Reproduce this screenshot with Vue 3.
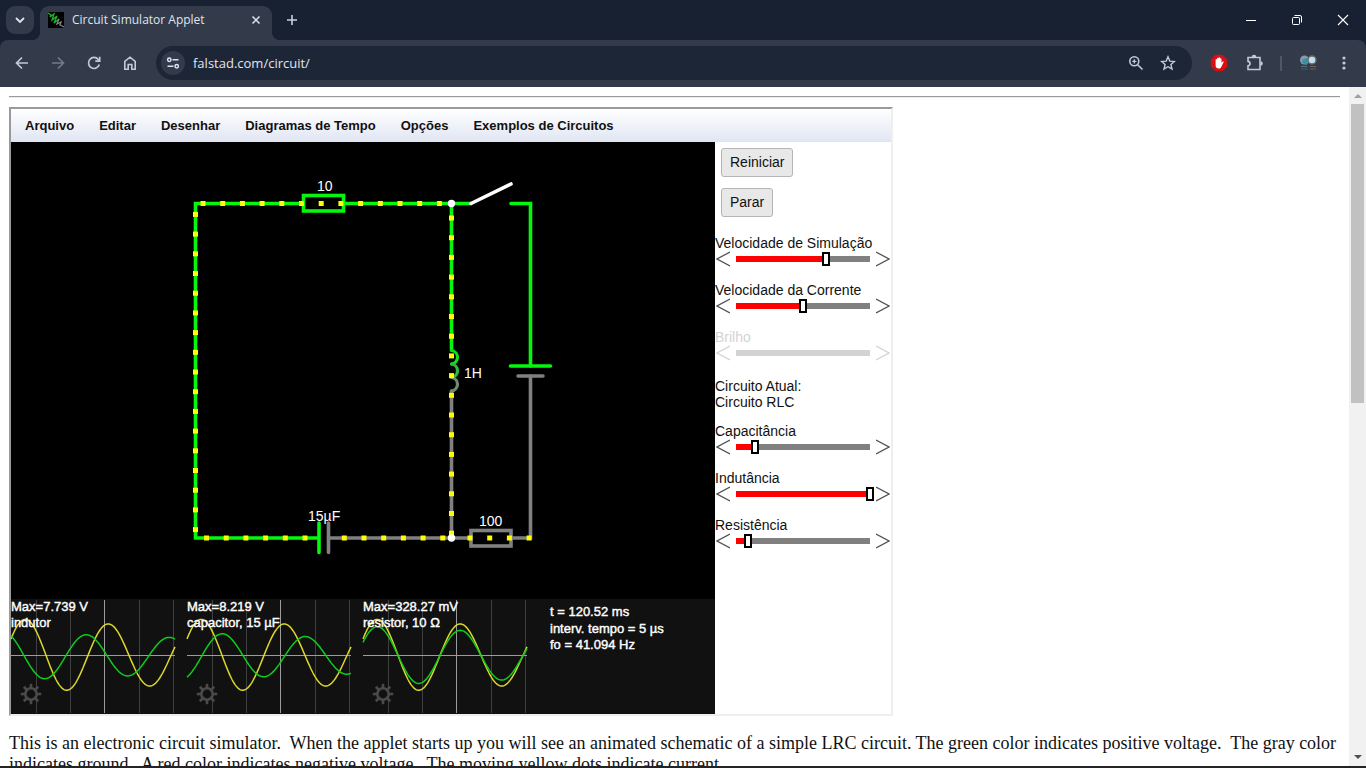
<script setup>
import { ref } from 'vue'

const menus = ['Arquivo', 'Editar', 'Desenhar', 'Diagramas de Tempo', 'Opções', 'Exemplos de Circuitos']

const simSliders = ref([
  { id: 'speed', label: 'Velocidade de Simulação', value: 67 },
  { id: 'current', label: 'Velocidade da Corrente', value: 50 },
  { id: 'bright', label: 'Brilho', value: 0, disabled: true },
])
const circuitSliders = ref([
  { id: 'cap', label: 'Capacitância', value: 14 },
  { id: 'ind', label: 'Indutância', value: 100 },
  { id: 'res', label: 'Resistência', value: 9 },
])

const PITCH = 19.7
const run = (x, y, n, dx, dy) =>
  Array.from({ length: n }, (_, i) => ({ x: x + dx * i * PITCH - 2.5, y: y + dy * i * PITCH - 2.5 }))
const dots = [
  ...run(203, 203.5, 13, 1, 0),
  ...run(195.5, 214.4, 17, 0, 1),
  ...run(206.5, 538, 6, 1, 0),
  ...run(344.3, 538, 6, 1, 0),
  ...run(470, 538, 4, 1, 0),
  ...run(451.5, 218, 17, 0, 1),
]

const wave = (left, peak, amp) => {
  const pts = []
  for (let x = 0; x <= 164; x++) {
    const y = 656 - amp * Math.exp(-0.0016 * x) * Math.cos((2 * Math.PI * (x - peak)) / 83)
    pts.push(`${left + x},${y.toFixed(1)}`)
  }
  return pts.join(' ')
}
const scopes = [
  { left: 11, max: 'Max=7.739 V', name: 'indutor', green: wave(11, -7.5, 24) },
  { left: 187, max: 'Max=8.219 V', name: 'capacitor, 15 µF', green: wave(187, 35.5, 23.5) },
  { left: 363, max: 'Max=328.27 mV', name: 'resistor, 10 Ω', green: wave(363, 14.5, 30) },
].map((s) => ({ ...s, yellow: wave(s.left, 14.5, 37.5) }))
const gridX = [25.5, 59.5, 128.5, 162.5]
const teeth = [0, 45, 90, 135, 180, 225, 270, 315]
</script>

<template>
  <div class="browser">
    <header class="tabs">
      <button class="tab-search" aria-label="Search tabs">
        <svg width="12" height="12" viewBox="0 0 12 12"><path d="M2 4 6 8 10 4" fill="none" stroke="#dfe3ee" stroke-width="1.8" /></svg>
      </button>
      <div class="tab">
        <svg class="favicon" width="16" height="16" viewBox="0 0 16 16">
          <rect width="16" height="16" fill="#000" />
          <path d="M0 1 3 3 2 5 6 2 4 8 9 4 6 11 11 7" fill="none" stroke="#1fb32a" stroke-width="1.3" />
          <path d="m11 7-2 5 4-2-1 3 4 2" fill="none" stroke="#858585" stroke-width="1.3" />
        </svg>
        <span class="tab-title">Circuit Simulator Applet</span>
        <button class="plain" aria-label="Close tab">
          <svg width="10" height="10" viewBox="0 0 10 10"><path d="m1.5 1.5 7 7m0-7-7 7" stroke="#dfe3ee" stroke-width="1.5" /></svg>
        </button>
      </div>
      <button class="plain new-tab" aria-label="New tab">
        <svg width="12" height="12" viewBox="0 0 12 12"><path d="M6 1v10M1 6h10" stroke="#c9cfdd" stroke-width="1.6" /></svg>
      </button>
      <div class="window-buttons">
        <button class="plain" aria-label="Minimize"><svg width="12" height="12" viewBox="0 0 12 12"><path d="M1 6.5h10" stroke="#fff" /></svg></button>
        <button class="plain" aria-label="Restore">
          <svg width="12" height="12" viewBox="0 0 12 12" fill="none" stroke="#fff"><rect x="1.5" y="3.5" width="7" height="7" rx="1" /><path d="M3.5 1.5H9a1.5 1.5 0 0 1 1.500 1.500V8.500" /></svg>
        </button>
        <button class="plain" aria-label="Close"><svg width="12" height="12" viewBox="0 0 12 12"><path d="m1 1 10 10M11 1 1 11" stroke="#fff" stroke-width="1.1" /></svg></button>
      </div>
    </header>

    <nav class="toolbar">
      <button class="plain" aria-label="Back">
        <svg width="16" height="16" viewBox="0 0 16 16" fill="none" stroke="#c3c9d8" stroke-width="1.7"><path d="M14 8H3M8 2.500 2.500 8 8 13.500" /></svg>
      </button>
      <button class="plain" aria-label="Forward">
        <svg width="16" height="16" viewBox="0 0 16 16" fill="none" stroke="#727a8b" stroke-width="1.7"><path d="M2 8h11M8 2.500 13.500 8 8 13.500" /></svg>
      </button>
      <button class="plain" aria-label="Reload">
        <svg width="16" height="16" viewBox="0 0 16 16" fill="none" stroke="#c3c9d8" stroke-width="1.7"><path d="M13.300 9.500A5.500 5.500 0 1 1 12.300 4.500L13.500 6M13.700 1.800V6.200H9.300" /></svg>
      </button>
      <button class="plain" aria-label="Home">
        <svg width="16" height="16" viewBox="0 0 16 16" fill="none" stroke="#c3c9d8" stroke-width="1.6"><path d="M2.800 6.300 8 2.200l5.200 4.100v8H9.800V9.500H6.200v4.800H2.800Z" /></svg>
      </button>
      <div class="omnibox">
        <button class="site-info" aria-label="Site information">
          <svg width="14" height="14" viewBox="0 0 14 14" fill="none" stroke="#dfe3ee" stroke-width="1.500"><circle cx="3.300" cy="3.800" r="1.700" /><path d="M6.500 3.800H12.500M1.500 10.200h6" /><circle cx="10.700" cy="10.200" r="1.700" /></svg>
        </button>
        <input class="url" aria-label="Address" value="falstad.com/circuit/" />
        <button class="plain" aria-label="Zoom">
          <svg width="16" height="16" viewBox="0 0 16 16" fill="none" stroke="#c3c9d8" stroke-width="1.600"><circle cx="6.300" cy="6.300" r="4.500" /><path d="m9.700 9.700 4.800 4.800" /><path d="M6.300 4.200v4.200M4.200 6.300h4.200" stroke-width="1.300" /></svg>
        </button>
        <button class="plain" aria-label="Bookmark">
          <svg width="16" height="16" viewBox="0 0 16 16" fill="none" stroke="#c3c9d8" stroke-width="1.400"><path d="m8 1.800 1.800 4.300 4.600.4-3.500 3 1.100 4.600L8 11.700l-4 2.400 1.100-4.600-3.500-3 4.600-.4Z" /></svg>
        </button>
      </div>
      <div class="extensions">
        <button class="plain" aria-label="Ad blocker">
          <svg width="18" height="18" viewBox="0 0 18 18">
            <path d="M5.600.8h6.800l4.800 4.800v6.800l-4.800 4.800H5.600L.8 12.400V5.600Z" fill="#d90f13" />
            <path d="M5.600 9V5.500a.8.8 0 0 1 1.500 0V4.200a.8.8 0 0 1 1.500 0v-.5a.8.8 0 0 1 1.500 0v1a.8.8 0 0 1 1.400 0v4l1.100-1.200c.7-.5 1.300.1 1 .8l-2.500 5c-.5.900-1.200 1.300-2.200 1.300-2 0-3.300-1.100-3.300-3Z" fill="#fff" />
          </svg>
        </button>
        <button class="plain" aria-label="Extensions">
          <svg width="18" height="18" viewBox="0 0 18 18" fill="none" stroke="#c3c9d8" stroke-width="1.600"><path d="M2 3.500h12v12H2v-3.800c2.700-.3 2.700-4 0-4.300Z" /><path d="M6.500 3a1.500 1.500 0 0 1 3 0M14.500 8a1.500 1.500 0 0 1 0 3" fill="#c3c9d8" /></svg>
        </button>
        <span class="divider"></span>
        <button class="plain" aria-label="Profile">
          <svg width="20" height="18" viewBox="0 0 20 18"><circle cx="6.500" cy="6" r="4.500" fill="#879ca5" /><path d="m5 5 5-1-1 7-5-2Z" fill="#3791ad" /><circle cx="14" cy="6" r="4" fill="#b8e2fa" stroke="#75675a" stroke-width="1.500" /><path d="M3 12.500h6m3 0h6" stroke="#6b6a6a" /><path d="M3 15h7" stroke="#315879" stroke-width="1.500" /><path d="M12 15h6" stroke="#655248" stroke-width="1.500" /></svg>
        </button>
        <button class="plain" aria-label="Menu">
          <svg width="16" height="16" viewBox="0 0 16 16" fill="#c3c9d8"><circle cx="8" cy="3" r="1.600" /><circle cx="8" cy="8" r="1.600" /><circle cx="8" cy="13" r="1.600" /></svg>
        </button>
      </div>
    </nav>

    <div class="viewport">
      <main class="page">
        <hr />
        <section class="applet">
          <div class="menubar">
            <button v-for="m in menus" :key="m">{{ m }}</button>
          </div>
          <div class="workspace">
            <svg class="circuit" viewBox="11 142 704 572" role="img" aria-label="Circuito RLC">
              <rect x="11" y="142" width="704" height="572" fill="#000" />
              <g fill="none" stroke-width="3.600" stroke-linecap="round">
                <g stroke="#808080">
                  <path d="M451.500 391V538M328.500 538H470M512 538H530.500V376" />
                  <path d="M328.500 523V552.500M518 376H543" />
                  <rect x="471" y="530.500" width="40" height="15.500" stroke-linecap="butt" />
                </g>
                <g stroke="#04f70c">
                  <path d="M303 203.500H195.500V538H318M345 203.500H471M451.500 203.500V350M511 203.500H530.500V366" />
                  <path d="M319 523V552.500M510.500 366H550.500" />
                  <rect x="303.500" y="195.500" width="40" height="15.500" />
                </g>
                <path d="M451.500 350.500a6.800 6.800 0 0 1 0 13.500" stroke="#12df1b" stroke-width="3.200" />
                <path d="M451.500 364a6.800 6.800 0 0 1 0 13.500" stroke="#33b83a" stroke-width="3.200" />
                <path d="M451.500 377.500a6.800 6.800 0 0 1 0 13.500" stroke="#708b70" stroke-width="3.200" />
                <path d="M471 203.500 511 184" stroke="#fff" />
              </g>
              <rect v-for="(d, i) in dots" :key="i" :x="d.x" :y="d.y" width="5" height="5" fill="#ff0" />
              <g fill="#fff">
                <circle cx="451.500" cy="203.500" r="3.700" />
                <circle cx="451.500" cy="538" r="3.700" />
              </g>
              <g class="value">
                <text x="317" y="191">10</text>
                <text x="464" y="378">1H</text>
                <text x="308" y="521">15µF</text>
                <text x="479" y="526">100</text>
              </g>

              <rect x="11" y="599" width="704" height="115" fill="#111" />
              <g v-for="s in scopes" :key="s.name">
                <path v-for="g in gridX" :key="g" :d="`M${s.left + g} 600V713`" stroke="#404040" />
                <path :d="`M${s.left + 93.5} 600V713M${s.left} 655.5H${s.left + 164}`" stroke="#9c9c9c" />
                <polyline :points="s.yellow" fill="none" stroke="#dcd82a" stroke-width="1.500" />
                <polyline :points="s.green" fill="none" stroke="#10cc1c" stroke-width="1.500" />
                <g :transform="`translate(${s.left + 20} 694)`" stroke="#4a4a4a" fill="none">
                  <circle r="5.700" stroke-width="2.600" />
                  <path v-for="t in teeth" :key="t" d="M0-6V-10.200" stroke-width="2.600" :transform="`rotate(${t})`" />
                </g>
                <g class="readout">
                  <text :x="s.left" y="611">{{ s.max }}</text>
                  <text :x="s.left" y="627">{{ s.name }}</text>
                </g>
              </g>
              <g class="readout">
                <text x="550" y="616">t = 120.52 ms</text>
                <text x="550" y="633">interv. tempo = 5 µs</text>
                <text x="550" y="649">fo = 41.094 Hz</text>
              </g>
            </svg>

            <aside class="controls">
              <div class="buttons">
                <button>Reiniciar</button>
                <button>Parar</button>
              </div>
              <div v-for="s in simSliders" :key="s.id" class="control" :class="{ off: s.disabled }">
                <label :for="s.id">{{ s.label }}</label>
                <div class="slider">
                  <svg width="14" height="16" viewBox="0 0 14 16"><path d="M14 1 1 8l13 7" fill="none" stroke="currentColor" stroke-width="1.300" /></svg>
                  <input :id="s.id" v-model="s.value" type="range" :disabled="s.disabled" :style="{ '--v': s.value / 100 }" />
                  <svg width="14" height="16" viewBox="0 0 14 16"><path d="m0 1 13 7-13 7" fill="none" stroke="currentColor" stroke-width="1.300" /></svg>
                </div>
              </div>
              <p class="current">Circuito Atual:<br />Circuito RLC</p>
              <div v-for="s in circuitSliders" :key="s.id" class="control">
                <label :for="s.id">{{ s.label }}</label>
                <div class="slider">
                  <svg width="14" height="16" viewBox="0 0 14 16"><path d="M14 1 1 8l13 7" fill="none" stroke="currentColor" stroke-width="1.300" /></svg>
                  <input :id="s.id" v-model="s.value" type="range" :style="{ '--v': s.value / 100 }" />
                  <svg width="14" height="16" viewBox="0 0 14 16"><path d="m0 1 13 7-13 7" fill="none" stroke="currentColor" stroke-width="1.300" /></svg>
                </div>
              </div>
            </aside>
          </div>
        </section>
        <p class="intro">This is an electronic circuit simulator.&nbsp; When the applet starts up you will see an animated schematic of a simple LRC circuit. The green color indicates positive voltage.&nbsp; The gray color indicates ground.&nbsp; A red color indicates negative voltage.&nbsp; The moving yellow dots indicate current.</p>
      </main>
      <div class="scrollbar">
        <svg width="17" height="17" viewBox="0 0 17 17"><path d="M5 11h8L9 7Z" fill="#a0a0a0" /></svg>
        <div class="thumb"></div>
        <svg width="17" height="17" viewBox="0 0 17 17"><path d="M5 6h8l-4 4Z" fill="#505050" /></svg>
      </div>
    </div>
  </div>
</template>

<style>
body {
  margin: 0;
}
</style>

<style scoped>
* {
  box-sizing: border-box;
}
.browser {
  display: flex;
  flex-direction: column;
  height: 100vh;
  overflow: hidden;
  background: #182131;
  border-bottom: 2px solid #242424;
  font-family: "Open Sans", "Noto Sans", sans-serif;
}
button {
  font: inherit;
  border: 0;
  padding: 0;
}
svg {
  display: block;
  flex: none;
}
.plain {
  background: none;
  display: grid;
  place-items: center;
}
.tabs {
  display: flex;
  flex: none;
  height: 40px;
  padding-left: 6px;
}
.tab-search {
  display: grid;
  place-items: center;
  width: 28px;
  height: 28px;
  margin: 6px 6px 0 0;
  border-radius: 9px;
  background: #333b4a;
}
.tab {
  position: relative;
  display: flex;
  align-items: center;
  gap: 8px;
  width: 232px;
  height: 34px;
  margin-top: 6px;
  padding: 0 11px 6px 8px;
  border-radius: 9px 9px 0 0;
  background: #333b4a;
}
.tab::before,
.tab::after {
  content: "";
  position: absolute;
  bottom: 0;
  width: 8px;
  height: 8px;
}
.tab::before {
  right: 100%;
  background: radial-gradient(circle at 0 0, transparent 8px, #333b4a 8px);
}
.tab::after {
  left: 100%;
  background: radial-gradient(circle at 100% 0, transparent 8px, #333b4a 8px);
}
.tab-title {
  flex: 1;
  font-size: 12px;
  line-height: 16px;
  color: #dfe3ee;
  white-space: nowrap;
}
.new-tab {
  width: 28px;
  height: 28px;
  margin: 6px 0 0 6px;
}
.window-buttons {
  display: flex;
  margin-left: auto;
}
.window-buttons .plain {
  width: 46px;
  height: 40px;
}
.toolbar {
  display: flex;
  align-items: center;
  flex: none;
  height: 47px;
  padding: 0 14px 1px;
  gap: 20px;
  background: #333b4a;
  border-radius: 8px 8px 0 0;
}
.omnibox {
  display: flex;
  align-items: center;
  flex: 1;
  height: 34px;
  margin: 0 -2px;
  padding: 0 16px 0 5px;
  gap: 16px;
  border-radius: 17px;
  background: #1d2636;
}
.site-info {
  display: grid;
  place-items: center;
  flex: none;
  width: 24px;
  height: 24px;
  margin-right: -8px;
  border-radius: 12px;
  background: #333b4a;
}
.url {
  flex: 1;
  min-width: 0;
  padding: 0;
  border: 0;
  outline: 0;
  background: none;
  color: #e1e5ef;
  font: 13px/20px "Open Sans", "Noto Sans", sans-serif;
}
.extensions {
  display: flex;
  align-items: center;
  gap: 18px;
}
.divider {
  width: 2px;
  height: 15px;
  margin: 0 -2px;
  background: #4f586b;
}
.viewport {
  display: flex;
  flex: 1;
  min-height: 0;
  background: #fff;
}
.page {
  flex: 1;
  min-width: 0;
  overflow: hidden;
  padding: 0 9px;
}
hr {
  margin: 9px 0;
  height: 2px;
  border: 0;
  border-top: 1px solid #9a9a9a;
  border-bottom: 1px solid #eee;
}
.applet {
  width: 884px;
  max-width: 100%;
  border: 2px solid;
  border-color: #9a9a9a #eee #eee #9a9a9a;
  font-family: "Liberation Sans", Arial, sans-serif;
}
.menubar {
  display: flex;
  gap: 25px;
  height: 33px;
  padding-left: 14px;
  background: linear-gradient(#fff, #e1e6f3);
  border-bottom: 1px solid #dfe3ee;
}
.menubar button {
  background: none;
  color: #111;
  font-size: 13px;
  font-weight: bold;
  white-space: nowrap;
}
.workspace {
  display: flex;
}
.circuit {
  flex: 1;
  min-width: 0;
}
.value {
  fill: #fff;
  font-size: 14px;
}
.readout {
  fill: #fff;
  stroke: #fff;
  stroke-width: 0.4px;
  font-size: 13px;
}
.controls {
  width: 176px;
  flex: none;
  color: #111;
  font-size: 14px;
  line-height: 16px;
}
.buttons {
  display: flex;
  flex-direction: column;
  align-items: flex-start;
  gap: 11px;
  padding: 6px 6px 18px;
}
.buttons button {
  height: 29px;
  padding: 0 8px 2px;
  border: 1px solid #b5b5b5;
  border-radius: 3px;
  background: #e8e8e8;
  color: #111;
}
.control {
  margin-bottom: 15px;
}
.control label {
  display: block;
  white-space: nowrap;
}
.slider {
  display: flex;
  align-items: center;
  justify-content: space-between;
  padding: 0 1px;
  height: 16px;
  color: #505050;
}
.slider input {
  appearance: none;
  flex: 1;
  min-width: 0;
  height: 16px;
  margin: 0 2px;
  background:
    linear-gradient(#f00, #f00) 4px 5px / calc((100% - 8px) * var(--v)) 6px no-repeat,
    linear-gradient(#808080, #808080) 4px 5px / calc(100% - 8px) 6px no-repeat;
}
.slider input::-webkit-slider-thumb {
  appearance: none;
  width: 8px;
  height: 14px;
  border: 2px solid #000;
  background: #fff;
}
.off,
.off .slider {
  color: #d3d3d3;
}
.off input {
  background: linear-gradient(#d3d3d3, #d3d3d3) 4px 5px / calc(100% - 8px) 6px no-repeat;
}
.off input::-webkit-slider-thumb {
  visibility: hidden;
}
.current {
  margin: 17px 0 13px;
}
.intro {
  margin: 17px 0 0;
  font: 18px/21px "Liberation Serif", "Times New Roman", serif;
  color: #111;
}
.scrollbar {
  display: flex;
  flex-direction: column;
  flex: none;
  width: 17px;
  background: #f1f1f1;
}
.thumb {
  flex: 0 0 44%;
  margin: 0 2px auto;
  background: #c1c1c1;
}
</style>
